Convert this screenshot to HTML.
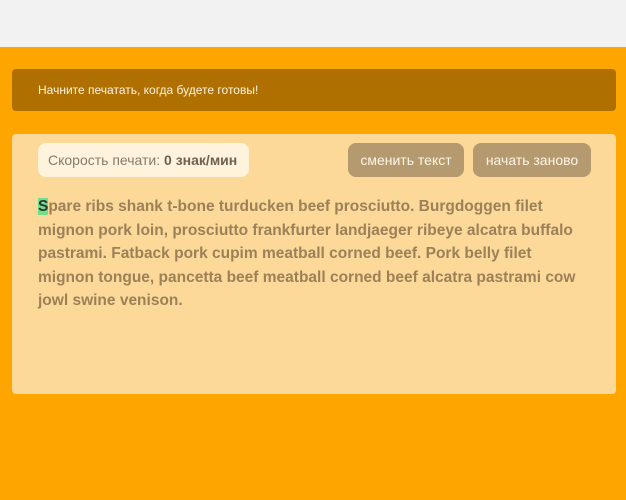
<!DOCTYPE html>
<html><head><meta charset="utf-8"><style>
body{margin:0;width:626px;height:500px;background:#ffa500;font-family:"Liberation Sans",sans-serif;position:relative;overflow:hidden}
.top{position:absolute;left:0;top:0;width:626px;height:47px;background:#f2f2f2}
.banner{position:absolute;left:12px;top:69px;width:604px;height:42px;background:#b07000;border-radius:4px;color:#fff4e0;font-size:12px;line-height:42px;box-sizing:border-box;padding-left:26px}
.card{position:absolute;left:12px;top:134px;width:604px;height:260px;background:#fdd999;border-radius:4px}
.pill{position:absolute;left:26px;top:9px;width:211px;height:34px;background:#fff3dc;border-radius:8px;color:#8a7a68;font-size:14px;line-height:34px;box-sizing:border-box;padding-left:10px;white-space:nowrap}
.pill b{color:#6f6050}
.btn{position:absolute;top:9px;height:34px;background:#b49a6e;border-radius:8px;color:#fff5e6;font-size:14px;line-height:34px;text-align:center}
.txt{position:absolute;left:26px;top:61px;color:#9c8158;font-weight:bold;font-size:15.5px;line-height:23.5px;white-space:nowrap}
.s{background:#6ee08a;color:#333}
</style></head><body>
<div class="top"></div>
<div class="banner">Начните печатать, когда будете готовы!</div>
<div class="card">
<div class="pill">Скорость печати: <b>0 знак/мин</b></div>
<div class="btn" style="left:336px;width:116px">сменить текст</div>
<div class="btn" style="left:461px;width:118px">начать заново</div>
<div class="txt"><span class="s">S</span>pare ribs shank t-bone turducken beef prosciutto. Burgdoggen filet<br>mignon pork loin, prosciutto frankfurter landjaeger ribeye alcatra buffalo<br>pastrami. Fatback pork cupim meatball corned beef. Pork belly filet<br>mignon tongue, pancetta beef meatball corned beef alcatra pastrami cow<br>jowl swine venison.</div>
</div>
</body></html>
